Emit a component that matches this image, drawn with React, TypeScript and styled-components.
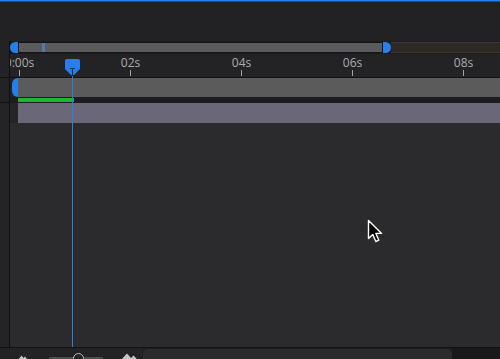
import React from "react";
import styled, { createGlobalStyle } from "styled-components";

const Global = createGlobalStyle`
  html, body { margin: 0; padding: 0; background: #232225; }
  body { font-family: "Open Sans", "Liberation Sans", sans-serif; }
  * { box-sizing: border-box; }
`;

const Frame = styled.div`
  position: relative;
  width: 500px;
  height: 359px;
  overflow: hidden;
  display: flex;
  flex-direction: column;
  background: #232225;
`;

const AccentLine = styled.div`
  height: 2px;
  flex: none;
  background: linear-gradient(#2680eb 0 60%, #1d4f8c 60% 100%);
`;

const Header = styled.div`
  height: 39px;
  flex: none;
  background: #222124;
`;

const Timeline = styled.div`
  flex: 1;
  display: flex;
  min-height: 0;
`;

const Gutter = styled.div`
  width: 10px;
  flex: none;
  display: flex;
  flex-direction: column;
  background: #232225;
  border-right: 1px solid #0f0e11;
`;

const GutterCell = styled.div<{ $h?: number; $fill?: boolean }>`
  height: ${(p) => (p.$h ? `${p.$h}px` : "auto")};
  flex: ${(p) => (p.$fill ? 1 : "none")};
  border-bottom: ${(p) => (p.$fill ? "none" : "1px solid #111013")};
  background: ${(p) => (p.$fill ? "#242326" : "#232225")};
`;

const Tracks = styled.div`
  position: relative;
  flex: 1;
  display: flex;
  flex-direction: column;
  overflow: hidden;
  background: #2b2a2d;
`;

const NavRow = styled.div`
  height: 13px;
  flex: none;
  display: flex;
  align-items: stretch;
  padding: 1px 0;
  background: #1b1a1d;
`;

const Handle = styled.div<{ $side: "left" | "right" }>`
  width: 8px;
  flex: none;
  background: #2680eb;
  border-radius: ${(p) => (p.$side === "left" ? "6px 0 0 6px" : "0 6px 6px 0")};
`;

const NavBar = styled.div`
  width: 365px;
  flex: none;
  display: flex;
  background: #5b5b5d;
  border: 1px solid #141316;
`;

const NavMarker = styled.div`
  width: 3px;
  margin-left: 23px;
  background: #5079b0;
`;

const NavRest = styled.div`
  flex: 1;
  background: #2c2925;
  border-top: 1px solid #3c3830;
  border-bottom: 1px solid #3c3830;
`;

const Ruler = styled.div`
  height: 24px;
  flex: none;
  display: flex;
  margin-left: -46px;
  background: #232225;
  border-bottom: 1px solid #111013;
`;

const RulerCell = styled.div`
  width: 111px;
  flex: none;
  display: flex;
  flex-direction: column;
  align-items: center;
  padding-top: 2px;
`;

const RulerLabel = styled.span`
  font-family: "Open Sans", "Liberation Sans", sans-serif;
  font-size: 12px;
  line-height: 13px;
  color: #adadae;
  white-space: nowrap;
`;

const Tick = styled.div`
  width: 1px;
  height: 6px;
  margin-top: 1px;
  background: #a3a3a3;
`;

const LayerRow = styled.div`
  height: 19px;
  flex: none;
  display: flex;
  background: #222124;
`;

const LayerHandle = styled.div`
  width: 6px;
  margin-left: 2px;
  flex: none;
  background: #2680eb;
  border-radius: 6px 0 0 6px;
`;

const LayerBar = styled.div`
  flex: 1;
  background: #5b5b5c;
`;

const GreenRow = styled.div`
  height: 6px;
  flex: none;
  display: flex;
  align-items: flex-start;
  padding: 1px 0 0 8px;
  background: #1d1c1f;
`;

const WorkArea = styled.div<{ $w: number }>`
  width: ${(p) => p.$w}px;
  height: 4px;
  background: #21b536;
`;

const PurpleRow = styled.div`
  height: 20px;
  flex: none;
  display: flex;
  padding-left: 8px;
  background: #252427;
`;

const PurpleBar = styled.div`
  flex: 1;
  background: #6a6878;
`;

const Empty = styled.div`
  flex: 1;
  background: #2b2a2d;
`;

const Playhead = styled.div<{ $x: number }>`
  position: absolute;
  top: 18px;
  bottom: 0;
  left: ${(p) => p.$x - 7}px;
  width: 15px;
  display: flex;
  flex-direction: column;
  align-items: center;
  pointer-events: none;
`;

const PlayheadLine = styled.div`
  flex: 1;
  width: 1px;
  background: #2b7fe3;
`;

const BottomBar = styled.div`
  height: 12px;
  flex: none;
  display: flex;
  background: #1e1d20;
  border-top: 1px solid #121114;
`;

const Tools = styled.div`
  width: 143px;
  flex: none;
  display: flex;
  align-items: flex-start;
  padding-top: 6px;
  background: #232225;
`;

const SmallIcon = styled.svg`
  margin-left: 18px;
  flex: none;
`;

const Slider = styled.div`
  position: relative;
  margin-left: 21px;
  margin-top: 3px;
  width: 54px;
  height: 3px;
  background: #4c4b4f;
  border-radius: 1px;
`;

const Thumb = styled.div`
  position: absolute;
  left: 24px;
  top: -4px;
  width: 11px;
  height: 11px;
  border-radius: 50%;
  border: 1.5px solid #b9b9b9;
  background: #232225;
`;

const BigIcon = styled.svg`
  margin-left: 18px;
  margin-top: -1px;
  flex: none;
`;

const ScrollTrack = styled.div`
  width: 309px;
  flex: none;
  margin-top: 1px;
  background: #2b2a2d;
  border-radius: 5px 5px 0 0;
`;

const ScrollRest = styled.div`
  flex: 1;
  background: #19181b;
`;

const Cursor = styled.svg`
  position: absolute;
  left: 367px;
  top: 219px;
`;

const labels = ["0:00s", "02s", "04s", "06s", "08s"];

export default function App() {
  return (
    <Frame>
      <Global />
      <AccentLine />
      <Header />
      <Timeline>
        <Gutter>
          <GutterCell $h={37} />
          <GutterCell $h={25} />
          <GutterCell $fill />
        </Gutter>
        <Tracks>
          <NavRow>
            <Handle $side="left" />
            <NavBar>
              <NavMarker />
            </NavBar>
            <Handle $side="right" />
            <NavRest />
          </NavRow>
          <Ruler>
            {labels.map((l) => (
              <RulerCell key={l}>
                <RulerLabel>{l}</RulerLabel>
                <Tick />
              </RulerCell>
            ))}
          </Ruler>
          <LayerRow>
            <LayerHandle />
            <LayerBar />
          </LayerRow>
          <GreenRow>
            <WorkArea $w={56} />
          </GreenRow>
          <PurpleRow>
            <PurpleBar />
          </PurpleRow>
          <Empty />
          <Playhead $x={62}>
            <svg width="15" height="17" viewBox="0 0 15 17">
              <path d="M2 0 H13 Q15 0 15 2 V10 L9 16 H6 L0 10 V2 Q0 0 2 0 Z" fill="#2680eb" />
              <rect x="5" y="9" width="5" height="1" fill="#1a2a40" />
              <rect x="7" y="9" width="1" height="7" fill="#1a2a40" />
            </svg>
            <PlayheadLine />
          </Playhead>
        </Tracks>
      </Timeline>
      <BottomBar>
        <Tools>
          <SmallIcon width="10" height="6" viewBox="0 0 10 6">
            <path d="M0 6 L3.5 1.5 L5.5 4 L7 2.5 L10 6 Z" fill="#c4c4c4" />
          </SmallIcon>
          <Slider>
            <Thumb />
          </Slider>
          <BigIcon width="17" height="7" viewBox="0 0 17 7">
            <path d="M0 7 L6 0.5 L10 5 L12.5 2.5 L17 7 Z" fill="#c4c4c4" />
          </BigIcon>
        </Tools>
        <ScrollTrack />
        <ScrollRest />
      </BottomBar>
      <Cursor width="16" height="25" viewBox="0 0 16 25">
        <path
          d="M1.5 1.5 V19.5 L5.8 15.5 L8.8 22.5 L11.8 21.2 L8.9 14.4 L14.6 14.4 Z"
          fill="#000"
          stroke="#fff"
          strokeWidth="1.4"
          strokeLinejoin="round"
        />
      </Cursor>
    </Frame>
  );
}
